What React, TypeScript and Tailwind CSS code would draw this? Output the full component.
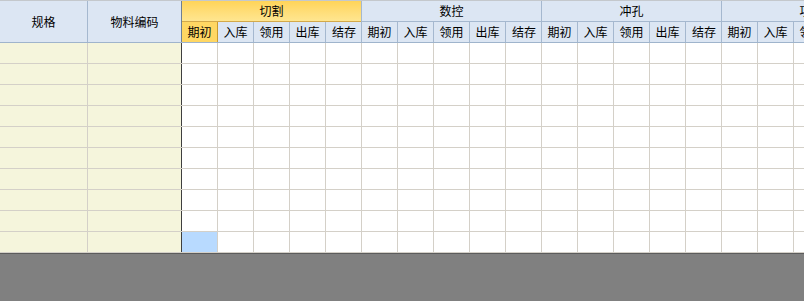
import React from 'react';

const groups = ['切割', '数控', '冲孔', '项目'];
const subs = ['期初', '入库', '领用', '出库', '结存'];
const rows = Array.from({ length: 10 }, (_, i) => i);
const cells = Array.from({ length: 20 }, (_, i) => i);

const App = () => {
  return (
    <div
      className="w-[804px] h-[301px] overflow-hidden bg-[#808080] text-[12px] text-black"
      style={{ fontFamily: '"Noto Sans CJK SC", "Noto Sans", sans-serif' }}
    >
      <div className="w-[1000px] bg-white border-t border-[#c4c8cc]">
        {/* Header */}
        <div className="flex h-[42px] bg-[#dce6f3] border-b border-[#9fb4cc]">
          <div className="w-[88px] shrink-0 flex items-center justify-center border-r border-[#a5b8cf]">规格</div>
          <div className="w-[94px] shrink-0 flex items-center justify-center border-r border-[#6f7f93]">物料编码</div>
          {groups.map((g, gi) => (
            <div key={g} className="w-[180px] shrink-0 flex flex-col border-r border-[#a5b8cf]">
              <div
                className={
                  gi === 0
                    ? 'h-[21px] flex items-center justify-center border-b border-[#d3a94a] bg-gradient-to-b from-[#ffd458] to-[#ffe690]'
                    : 'h-[21px] flex items-center justify-center border-b border-[#a5b8cf]'
                }
              >
                {g}
              </div>
              <div className="flex h-[20px]">
                {subs.map((s, si) => (
                  <div
                    key={s}
                    className={
                      gi === 0 && si === 0
                        ? 'w-[36px] shrink-0 flex items-center justify-center bg-[#ffd763] border-r border-[#c99a2e]'
                        : 'w-[36px] shrink-0 flex items-center justify-center border-r border-[#a5b8cf] last:border-r-0'
                    }
                  >
                    {s}
                  </div>
                ))}
              </div>
            </div>
          ))}
        </div>
        {/* Body */}
        {rows.map((r) => (
          <div key={r} className="flex h-[21px] border-b border-[#d4d0c8]">
            <div className="w-[88px] shrink-0 bg-[#f5f5dc] border-r border-[#d4d0c8]" />
            <div className="w-[94px] shrink-0 bg-[#f5f5dc] border-r border-[#3f3f3f]" />
            {cells.map((c) => (
              <div
                key={c}
                className={
                  r === 9 && c === 0
                    ? 'w-[36px] shrink-0 bg-[#b8daff] border-r border-[#d4d0c8]'
                    : 'w-[36px] shrink-0 border-r border-[#d4d0c8]'
                }
              />
            ))}
          </div>
        ))}
      </div>
      <div className="h-px bg-[#5c5c5c]" />
    </div>
  );
};

export default App;
